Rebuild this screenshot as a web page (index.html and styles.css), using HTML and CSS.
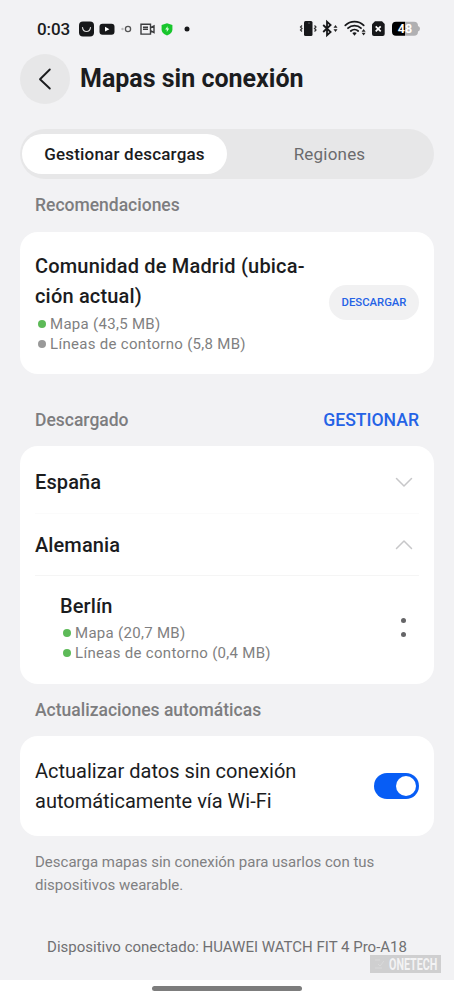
FILE: index.html
```
<!DOCTYPE html>
<html lang="es">
<head>
<meta charset="utf-8">
<title>Mapas sin conexión</title>
<link rel="stylesheet" href="styles.css">
</head>
<body>
<div class="screen">
  <header class="status">
    <span class="clock">0:03</span>
    <svg class="status-left" width="114" height="18" viewBox="0 0 114 18">
      <rect x="1" y="1.500" width="15" height="15" rx="4" fill="#17181a"/>
      <path d="M4.500 7.500q.5 4 4 4t4-4" fill="none" stroke="#ddd" stroke-width="1.200" stroke-linecap="round"/>
      <rect x="21.500" y="3.700" width="15" height="11" rx="3" fill="#17181a"/>
      <path d="M27 6.800v4.800l4.400-2.400z" fill="#fff"/>
      <circle cx="44.500" cy="9" r="1.200" fill="#b9b9bb"/>
      <circle cx="50" cy="9" r="2.600" fill="none" stroke="#555" stroke-width="1.300"/>
      <path d="M63 4.300h9.500v9.800H63zM65 7.200h5M65 9.200h5M73 7.500l3-1.500v6.500l-3-1.500" fill="none" stroke="#3b3c3e" stroke-width="1.400"/>
      <path d="M89 3.200l5.400 1.900v4.200c0 3.500-2.700 5-5.400 6.200-2.700-1.200-5.400-2.700-5.400-6.200V5.100z" fill="#18c62c"/>
      <path d="M89.600 6.300l-2.400 3.300h1.600v2.400l2.400-3.400h-1.600z" fill="#d9ffd9"/>
      <circle cx="109" cy="9" r="2.500" fill="#17181a"/>
    </svg>
    <svg class="status-right" width="122" height="20" viewBox="0 0 122 20">
      <rect x="5" y="2" width="8.500" height="15" rx="1.500" fill="#17181a"/>
      <path d="M3 6.500l-1.500 1.500 1.500 1.500-1.500 1.500 1.500 1.500M15.500 6.500l1.500 1.500-1.500 1.500 1.500 1.500-1.500 1.500" fill="none" stroke="#333" stroke-width="1.200"/>
      <circle cx="10" cy="4" r=".6" fill="#aaa"/>
      <path d="M24.200 6l7.400 7-3.600 3.300V2.700L31.600 6l-7.400 7" fill="none" stroke="#17181a" stroke-width="1.800"/>
      <path d="M36.500 6l2 2.800h-4zM36.500 13l2-2.800h-4zM64.600 10l2 2.800h-4zM64.600 16.500l2-2.800h-4z" fill="#222"/>
      <path d="M46.300 6.300a13.500 13.500 0 0 1 18.400 0M49 9.200a9.500 9.500 0 0 1 13 0M51.800 12a5.400 5.400 0 0 1 7.400 0" fill="none" stroke="#17181a" stroke-width="1.800" stroke-linecap="round"/>
      <path d="M53.300 14.100q2.200-1.600 4.400 0l-2.200 2.600z" fill="#17181a"/>
      <path d="M76 2.300h7l2.700 2.700v10a2 2 0 0 1-2 2H75a2 2 0 0 1-2-2V5.300z" fill="#17181a"/>
      <path d="M76.700 7.400l5 5M81.700 7.400l-5 5" stroke="#fff" stroke-width="1.700"/>
      <path d="M97 2.800h9v14h-9a4 4 0 0 1-4-4v-6a4 4 0 0 1 4-4z" fill="#000"/>
      <path d="M106 2.800h9q4 0 4 4v6q0 4-4 4h-9z" fill="#b0b0b2"/>
      <path d="M119 7q2 .5 2 2.700t-2 2.700z" fill="#b0b0b2"/>
      <text class="battery-text" x="106" y="14.300" text-anchor="middle">48</text>
    </svg>
  </header>
  <div class="title-row">
    <div class="back"><svg width="50" height="50" viewBox="0 0 50 50"><path d="M29.800 15.500L20 25.200l9.800 9.300" fill="none" stroke="#1b1c1e" stroke-width="1.900" stroke-linecap="round" stroke-linejoin="round"/></svg></div>
    <h1 class="title">Mapas sin conexión</h1>
  </div>
  <nav class="tabs">
    <div class="tab tab-active">Gestionar descargas</div>
    <div class="tab">Regiones</div>
  </nav>
  <div class="section section-first"><span>Recomendaciones</span></div>
  <section class="card suggestion">
    <div>
      <h2 class="region region-madrid">Comunidad de Madrid (ubica-<br>ción actual)</h2>
      <div class="detail"><i class="dot"></i>Mapa (43,5 MB)</div>
      <div class="detail"><i class="dot dot-off"></i>Líneas de contorno (5,8 MB)</div>
    </div>
    <div class="download">DESCARGAR</div>
  </section>
  <div class="section section-mid"><span>Descargado</span><span class="manage">GESTIONAR</span></div>
  <section class="card downloaded">
    <div class="row"><h2 class="region">España</h2><svg width="18" height="12" viewBox="0 0 18 12"><path d="M1.500 2.500L9 10l7.500-7.500" class="chevron"/></svg></div>
    <div class="row row-open"><h2 class="region">Alemania</h2><svg width="18" height="12" viewBox="0 0 18 12"><path d="M1.500 9.500L9 2l7.500 7.500" class="chevron"/></svg></div>
    <div class="city">
      <div>
        <h2 class="region region-city">Berlín</h2>
        <div class="detail"><i class="dot"></i>Mapa (20,7 MB)</div>
        <div class="detail"><i class="dot"></i>Líneas de contorno (0,4 MB)</div>
      </div>
      <div class="more"><i></i><i></i></div>
    </div>
  </section>
  <div class="section section-last"><span>Actualizaciones automáticas</span></div>
  <section class="card auto">
    <div class="auto-text">Actualizar datos sin conexión<br>automáticamente vía Wi-Fi</div>
    <div class="switch"><i></i></div>
  </section>
  <p class="hint">Descarga mapas sin conexión para usarlos con tus<br>dispositivos wearable.</p>
  <footer class="device"><span>Dispositivo conectado: HUAWEI WATCH FIT 4 Pro-A18</span></footer>
  <div class="watermark"><svg width="15" height="16" viewBox="0 0 15 16"><path d="M2 4h5M2 12h7M5 8l2 2 4-5" fill="none" stroke="#d9d9da"/></svg><svg width="53" height="18" viewBox="0 0 53 18"><text class="brand" transform="translate(1 15) scale(.67 1)">ONETECH</text></svg></div>
</div>
<div class="home"><i></i></div>
</body>
</html>
```
FILE: styles.css
```
* { box-sizing: border-box; }
body { margin: 0; width: 454px; height: 1000px; overflow: hidden; background: #fff; color: #1b1c1e; font-family: Roboto, sans-serif; }
h1, h2, p { margin: 0; }
svg { display: block; }
.screen { position: relative; height: 980px; padding: 0 20px; background: #f2f2f4; }
.status { display: flex; align-items: center; height: 54px; padding: 4px 13px 0 17px; }
.clock { width: 41px; font-size: 17px; font-weight: 500; letter-spacing: -.1px; }
.status-right { margin-left: auto; }
.battery-text { fill: #fff; font: 700 12.500px Roboto, sans-serif; }
.title-row { display: flex; align-items: center; height: 50px; }
.back { width: 50px; height: 50px; border-radius: 50%; background: #e7e7e8; }
.title { margin-left: 10px; font-size: 25px; line-height: 30px; font-weight: 700; white-space: nowrap; }
.tabs { display: flex; height: 50px; margin-top: 25px; padding: 5px 2px; border-radius: 25px; background: #e7e7e8; }
.tab { display: flex; align-items: center; justify-content: center; width: 205px; font-size: 17px; letter-spacing: .2px; color: #6b6b6d; }
.tab-active { border-radius: 20px; background: #fff; color: #1b1c1e; font-weight: 500; }
.section { display: flex; align-items: center; justify-content: space-between; padding: 0 15px; color: #7d7d7f; font-size: 17.500px; font-weight: 500; }
.section-first { height: 53px; padding-bottom: 1px; }
.section-mid { height: 72px; padding-top: 20px; }
.section-last { height: 52px; }
.manage { color: #2563e6; font-size: 17.600px; }
.card { border-radius: 18px; background: #fff; }
.suggestion { display: flex; justify-content: space-between; height: 142px; padding: 19px 15px; }
.region { font-size: 20px; line-height: 30px; font-weight: 500; letter-spacing: .1px; white-space: nowrap; }
.region-madrid { margin-bottom: 3px; letter-spacing: .18px; }
.detail { display: flex; align-items: center; height: 20px; padding-left: 3px; color: #7f7f81; font-size: 15px; letter-spacing: .3px; white-space: nowrap; }
.dot { width: 8px; height: 8px; margin-right: 4px; border-radius: 50%; background: #5dba58; }
.dot-off { background: #999; }
.download { display: flex; align-items: center; justify-content: center; width: 90px; height: 35px; margin-top: 34px; padding-bottom: 1px; border-radius: 18px; background: #f1f1f2; color: #2563e6; font-size: 11.300px; font-weight: 500; }
.downloaded { height: 238px; padding: 5px 15px 0; }
.row { display: flex; align-items: center; justify-content: space-between; height: 63px; padding-right: 6px; border-bottom: 1px solid #fbfbfb; }
.row-open { height: 62px; border-bottom-color: #f5f5f5; }
.chevron { fill: none; stroke: #c7c7c9; stroke-width: 1.500; stroke-linecap: round; stroke-linejoin: round; }
.city { display: flex; justify-content: space-between; padding: 14px 13px 0 25px; }
.region-city { line-height: 32px; margin-bottom: 1px; }
.more { display: flex; flex-direction: column; gap: 9px; margin-top: 28px; }
.more i { width: 5px; height: 5px; border-radius: 50%; background: #656567; }
.auto { display: flex; align-items: center; justify-content: space-between; height: 100px; padding: 0 15px; }
.auto-text { font-size: 20px; line-height: 30px; white-space: nowrap; }
.switch { display: flex; justify-content: flex-end; width: 45px; height: 26px; padding: 3px; border-radius: 13px; background: #075df5; }
.switch i { width: 20px; height: 20px; border-radius: 50%; background: #fff; }
.hint { margin: 15px 15px 0; color: #808082; font-size: 15px; line-height: 22.500px; white-space: nowrap; }
.device { margin-top: 39px; text-align: center; color: #707072; font-size: 15px; line-height: 24px; white-space: nowrap; }
.watermark { position: absolute; right: 13px; bottom: 7px; display: flex; align-items: center; width: 71px; height: 18px; padding-left: 3px; background: #cfcfd0; }
.brand { fill: #f3f3f4; font: 700 16px Roboto, sans-serif; }
.home { display: flex; justify-content: center; height: 20px; padding-top: 6px; background: #fff; }
.home i { width: 150px; height: 5px; border-radius: 3px; background: #7d7d7d; }
```
